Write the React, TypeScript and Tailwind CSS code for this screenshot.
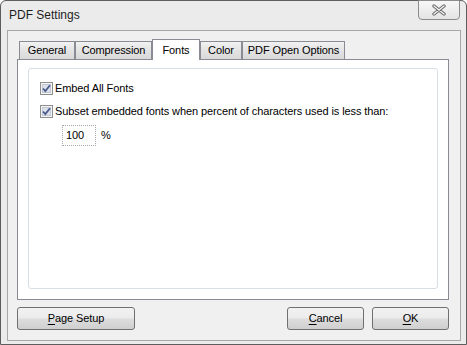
import React from "react";

const font = { fontFamily: '"Liberation Sans", Arial, sans-serif' };

const tabs = [
  { label: "General", w: "w-[56px]" },
  { label: "Compression", w: "w-[77px]" },
  { label: "Fonts", w: "w-[48px]", active: true },
  { label: "Color", w: "w-[42px]" },
  { label: "PDF Open Options", w: "w-[103px]" },
];

function CheckBox() {
  return (
    <svg width="13" height="13" viewBox="0 0 13 13" className="shrink-0">
      <rect x="0.5" y="0.5" width="12" height="12" fill="#f4f4f4" stroke="#8e8f8f" />
      <rect x="2.5" y="2.5" width="8" height="8" fill="#dde1ea" stroke="#c2c8d3" />
      <path d="M3 6.5 L5.3 9 L10 3.2" fill="none" stroke="#4a5c8c" strokeWidth="1.8" />
    </svg>
  );
}

function Button({ w, pre, u, post }: { w: string; pre?: string; u: string; post: string }) {
  return (
    <div
      className={`${w} h-[23px] flex items-center justify-center rounded-[3px] border border-[#707070] bg-[linear-gradient(to_bottom,#f2f2f2_0%,#ebebeb_48%,#dddddd_52%,#cfcfcf_100%)] text-[11px] text-black`}
    >
      <span>
        {pre}
        <span className="underline underline-offset-[2px]">{u}</span>
        {post}
      </span>
    </div>
  );
}

export default function App() {
  return (
    <div style={font} className="w-[467px] h-[345px] bg-white">
      <div className="w-[467px] h-[345px] flex flex-col border border-[#5d5d5d] rounded-t-[6px] bg-[#ebebeb]">
        {/* title bar */}
        <div className="h-[29px] flex items-start justify-between">
          <div className="pl-[8px] pt-[6px] text-[12px] leading-[16px] text-[#1e1e1e]">PDF Settings</div>
          <div className="-mt-px mr-[6px] w-[42px] h-[20px] flex items-center justify-center rounded-b-[4px] border border-[#8c8c8c] bg-[linear-gradient(to_bottom,#f7f7f7,#e4e4e4)]">
            <svg width="14" height="12" viewBox="0 0 14 12">
              <path d="M2 2 L12 10 M12 2 L2 10" stroke="#6b6b6b" strokeWidth="3.4" strokeLinecap="round" />
              <path d="M2 2 L12 10 M12 2 L2 10" stroke="#f2f2f2" strokeWidth="1.4" strokeLinecap="round" />
            </svg>
          </div>
        </div>

        {/* client area */}
        <div className="ml-[6px] mr-[5px] h-[311px] border border-[#a7a7a7] bg-[#f0f0f0] flex flex-col text-[11px] tracking-[-0.1px] text-black">
          <div className="ml-[9px] mt-[8px] w-[432px]">
            {/* tabs */}
            <div className="h-[20px] flex items-end pl-[2px]">
              {tabs.map((t) =>
                t.active ? (
                  <div
                    key={t.label}
                    className={`${t.w} h-[21px] -mb-px relative z-10 flex items-start justify-center pt-[2px] border border-b-0 border-[#898c95] bg-white`}
                  >
                    {t.label}
                  </div>
                ) : (
                  <div
                    key={t.label}
                    className={`${t.w} h-[18px] flex items-center justify-center border border-b-0 border-[#898c95] bg-[linear-gradient(to_bottom,#f2f2f2,#e3e3e3_50%,#d9d9d9)]`}
                  >
                    {t.label}
                  </div>
                )
              )}
            </div>
            {/* panel */}
            <div className="h-[241px] border border-[#898c95] bg-white px-[10px] pt-[8px]">
              <div className="h-[221px] rounded-[3px] border border-[#d5dfe5] pl-[11px] pt-[11px] flex flex-col">
                <div className="h-[17px] flex items-center">
                  <CheckBox />
                  <span className="ml-[2px]">Embed All Fonts</span>
                </div>
                <div className="mt-[6px] h-[17px] flex items-center">
                  <CheckBox />
                  <span className="ml-[2px]">Subset embedded fonts when percent of characters used is less than:</span>
                </div>
                <div className="mt-[5px] ml-[22px] flex items-center">
                  <div className="w-[34px] h-[21px] border border-dotted border-[#a6a6a6] bg-white pl-[3px] flex items-center">
                    100
                  </div>
                  <span className="ml-[5px]">%</span>
                </div>
              </div>
            </div>
          </div>

          {/* buttons */}
          <div className="mt-[7px] ml-[9px] mr-[11px] flex items-center">
            <Button w="w-[118px]" u="P" post="age Setup" />
            <div className="flex-1" />
            <Button w="w-[77px]" u="C" post="ancel" />
            <div className="w-[8px]" />
            <Button w="w-[77px]" u="O" post="K" />
          </div>
        </div>
      </div>
    </div>
  );
}
